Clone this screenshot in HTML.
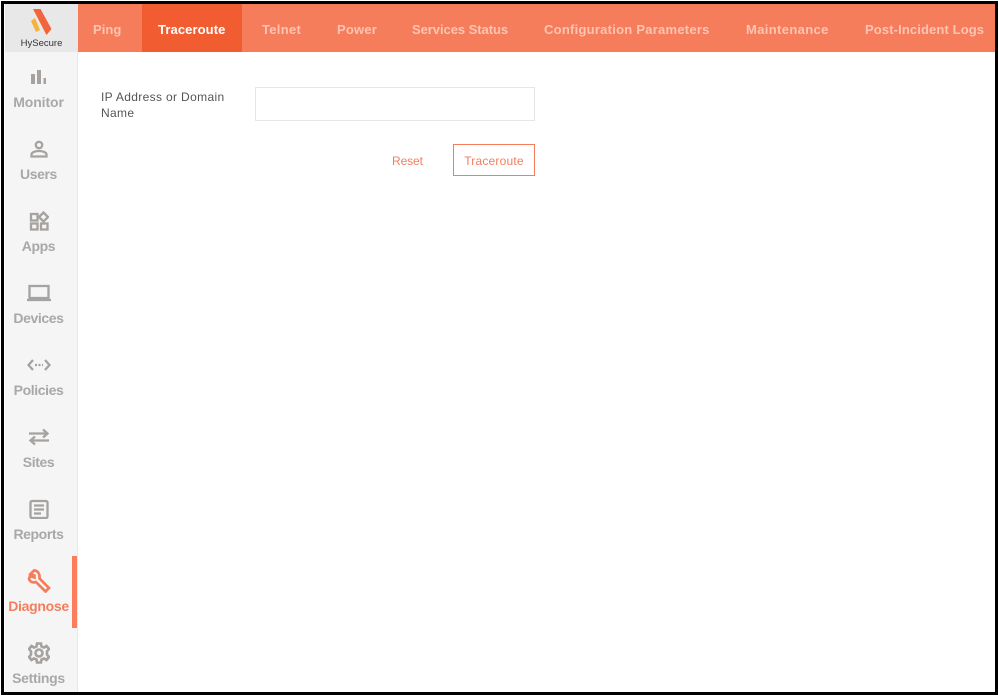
<!DOCTYPE html>
<html><head><meta charset="utf-8"><style>
html,body{margin:0;padding:0;background:#fff}
#p{position:relative;width:998px;height:697px;overflow:hidden;background:#fff;font-family:"Liberation Sans",sans-serif}
#p div,#p svg{position:absolute}
.t{top:22px;height:16px;line-height:16px;font-size:13px;font-weight:bold;color:#fdc4b2;white-space:nowrap}
.n{left:5px;width:67px;text-align:center;font-size:14px;font-weight:bold;color:#a8a8a8;line-height:16px;white-space:nowrap;letter-spacing:-.4px}
svg.i{fill:none;stroke:#a5a2a0;stroke-width:2.300}
</style></head><body><div id="p">
<div style="left:5px;top:52px;width:72px;height:641px;background:#f5f5f5;border-right:1px solid #e8e8e8"></div>
<div style="left:5px;top:4px;width:73px;height:48px;background:#e9e8e8"></div>
<svg style="left:28px;top:8px" width="26" height="28" viewBox="0 0 26 28"><path d="M5 1H12.500L23.500 21L18.500 27Z" fill="#f2643a"/><path d="M3 13L7 10L12 22L8 24Z" fill="#f7b23b"/></svg>
<div style="left:5px;top:37px;width:73px;text-align:center;font-size:9.500px;line-height:13px;color:#333">HySecure</div>
<div style="left:78px;top:4px;width:917px;height:48px;background:#f67d5c"></div>
<div style="left:142px;top:4px;width:100px;height:48px;background:#f15c30"></div>
<div class="t" style="left:93px;letter-spacing:.05px">Ping</div>
<div class="t" style="left:158px;color:#fff;letter-spacing:.1px">Traceroute</div>
<div class="t" style="left:262px;letter-spacing:.3px">Telnet</div>
<div class="t" style="left:337px;letter-spacing:.2px">Power</div>
<div class="t" style="left:412px;letter-spacing:-.05px">Services Status</div>
<div class="t" style="left:544px;letter-spacing:.25px">Configuration Parameters</div>
<div class="t" style="left:746px;letter-spacing:.36px">Maintenance</div>
<div class="t" style="left:865px;letter-spacing:.12px">Post-Incident Logs</div>

<svg class="i" style="left:29px;top:67px" width="20" height="20" viewBox="0 0 20 20"><path d="M2 7H6V17H2ZM8 3H12V17H8ZM14.500 11H17V17H14.500Z" fill="#a5a2a0" stroke="none"/></svg>
<div class="n" style="top:94px;letter-spacing:-.1px">Monitor</div>
<svg class="i" style="left:29px;top:139px" width="20" height="20" viewBox="0 0 20 20"><circle cx="10" cy="6" r="3.200"/><path d="M2.500 17.500V15.500C2.500 13 7 12 10 12S17.500 13 17.500 15.500V17.500Z"/></svg>
<div class="n" style="top:166px">Users</div>
<svg class="i" style="left:29px;top:211px" width="20" height="20" viewBox="0 0 20 20"><path d="M2 3H8.500V9.500H2ZM2 12.500H8.500V18.500H2ZM12 12.500H18.500V18.500H12ZM14.500 1.500L19 6L14.500 10.500L10 6Z"/></svg>
<div class="n" style="top:238px">Apps</div>
<svg class="i" style="left:27px;top:283px" width="24" height="20" viewBox="0 0 24 20"><path d="M2.500 3H21.500V15H2.500Z"/><path d="M0 17H24"/></svg>
<div class="n" style="top:310px">Devices</div>
<svg class="i" style="left:27px;top:355px" width="24" height="20" viewBox="0 0 24 20"><path d="M6 5L1.500 10L6 15M18 5L22.500 10L18 15"/><path d="M8 10H16" stroke-dasharray="2 1.500"/></svg>
<div class="n" style="top:382px">Policies</div>
<svg class="i" style="left:28px;top:427px" width="22" height="20" viewBox="0 0 22 20"><path d="M1 6.500H19M15 2.500L19.500 6.500L15 10.500M21 13.500H3M7 9.500L2.500 13.500L7 17.500"/></svg>
<div class="n" style="top:454px">Sites</div>
<svg class="i" style="left:29px;top:499px" width="20" height="20" viewBox="0 0 20 20"><rect x="1.500" y="2" width="17" height="17" rx="1.500"/><path d="M5 6.500H15M5 10.500H15M5 14.500H12"/></svg>
<div class="n" style="top:526px">Reports</div>
<div style="left:72px;top:556px;width:5px;height:72px;background:#fb7d5b"></div>
<svg style="left:27px;top:569px;fill:none;stroke:#f67d5c;stroke-width:2.700" width="24" height="24" viewBox="0 0 24 24"><path d="M7 1.500L3.500 5L7.500 6.500L7.500 8.500L3 7L2 10C3 13 6 14 9 13L18.500 22.500L22 19L12.500 9.500C13 5 11 1.500 7 1.500Z"/></svg>
<div class="n" style="top:598px;color:#f67d5c;letter-spacing:-.3px">Diagnose</div>
<svg style="left:28px;top:642px;fill:none;stroke:#a5a2a0;stroke-width:2.600" width="22" height="22" viewBox="0 0 22 22"><circle cx="11" cy="11" r="3.500"/><path d="M9 1.500H13L13.500 4.500L16 5.500L18.500 4L21 7L19 9.300V12.700L21 15L18.500 18L16 16.500L13.500 17.500L13 20.500H9L8.500 17.500L6 16.500L3.500 18L1 15L3 12.700V9.300L1 7L3.500 4L6 5.500L8.500 4.500Z"/></svg>
<div class="n" style="top:670px;letter-spacing:-.3px">Settings</div>

<div style="left:101px;top:89px;width:140px;font-size:12px;line-height:16px;color:#555;letter-spacing:.35px">IP Address or Domain Name</div>
<div style="left:255px;top:87px;width:278px;height:32px;border:1px solid #e6e6e6;background:#fff"></div>
<div style="left:392px;top:153px;font-size:12px;line-height:16px;color:#f67d5c;letter-spacing:-.1px">Reset</div>
<div style="left:453px;top:144px;width:80px;height:30px;border:1px solid #f67d5c;text-align:center;font-size:12px;line-height:32px;color:#f67d5c;letter-spacing:.2px">Traceroute</div>

<div style="left:1px;top:1px;width:991px;height:688px;border:3px solid #000"></div>
</div></body></html>
